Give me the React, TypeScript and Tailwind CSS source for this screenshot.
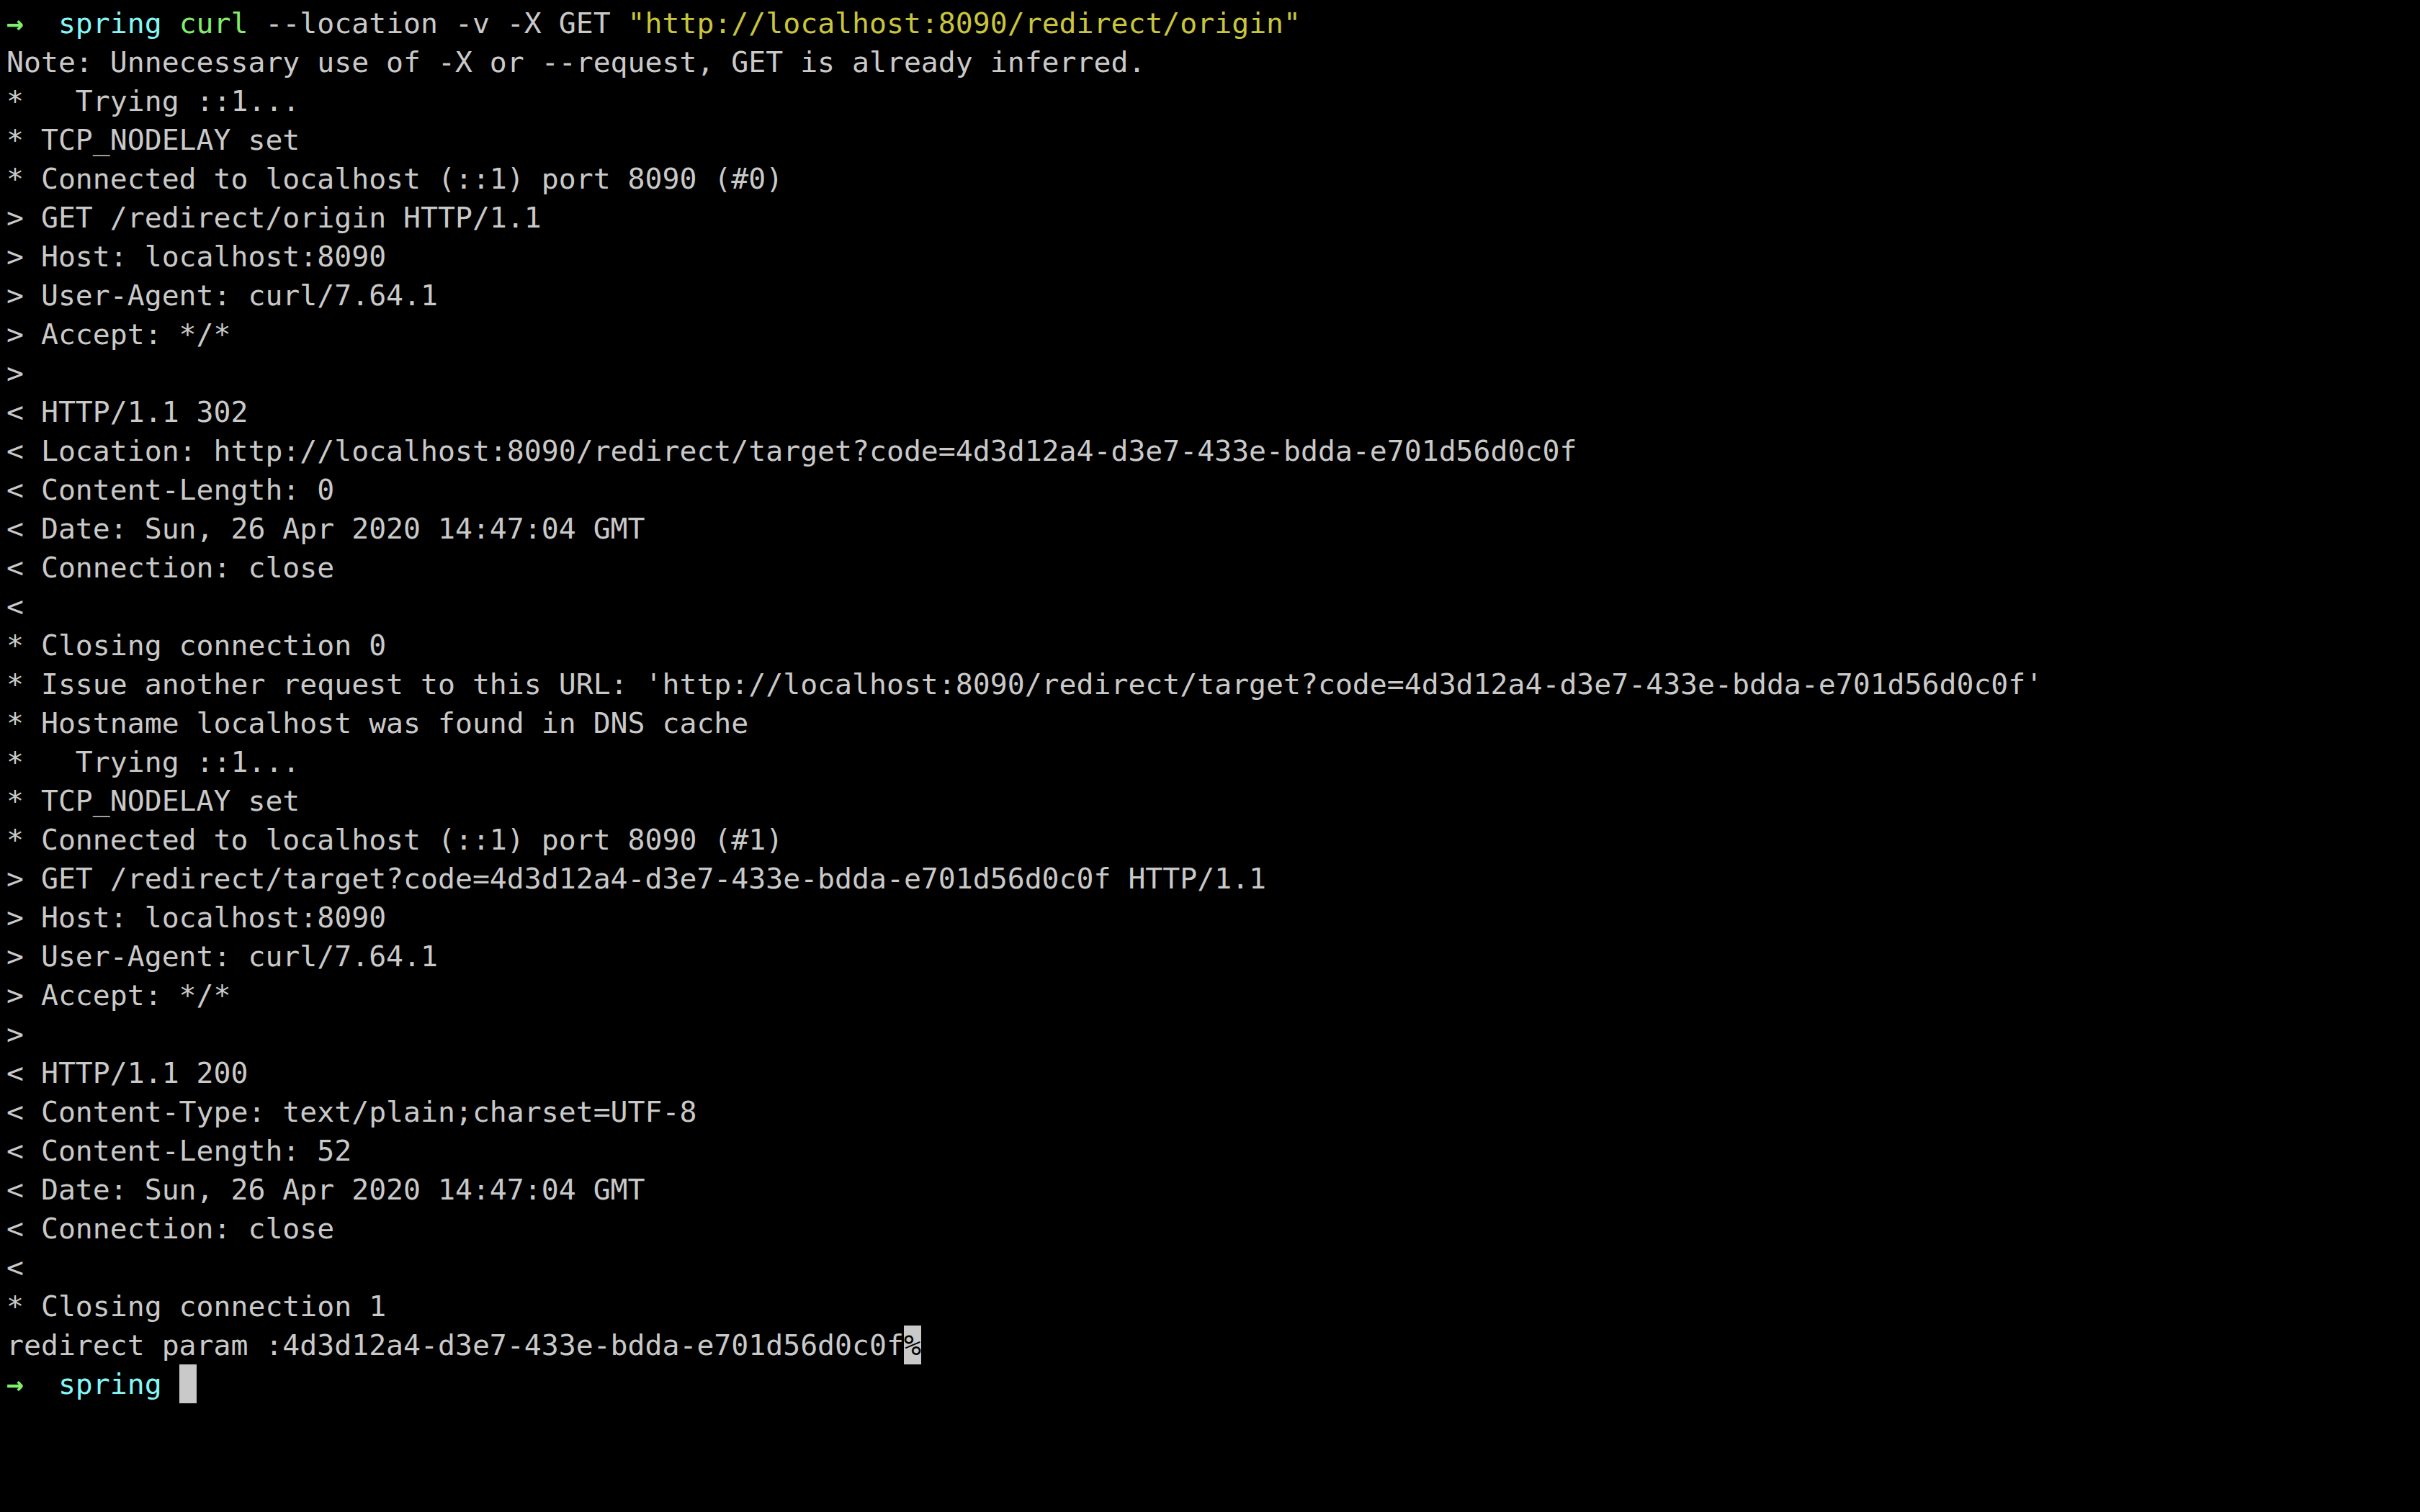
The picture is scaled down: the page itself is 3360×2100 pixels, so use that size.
import React from "react";

const URL_ID = "4d3d12a4-d3e7-433e-bdda-e701d56d0c0f";

const lines: string[] = [
  "Note: Unnecessary use of -X or --request, GET is already inferred.",
  "*   Trying ::1...",
  "* TCP_NODELAY set",
  "* Connected to localhost (::1) port 8090 (#0)",
  "> GET /redirect/origin HTTP/1.1",
  "> Host: localhost:8090",
  "> User-Agent: curl/7.64.1",
  "> Accept: */*",
  ">",
  "< HTTP/1.1 302",
  `< Location: http://localhost:8090/redirect/target?code=${URL_ID}`,
  "< Content-Length: 0",
  "< Date: Sun, 26 Apr 2020 14:47:04 GMT",
  "< Connection: close",
  "<",
  "* Closing connection 0",
  `* Issue another request to this URL: 'http://localhost:8090/redirect/target?code=${URL_ID}'`,
  "* Hostname localhost was found in DNS cache",
  "*   Trying ::1...",
  "* TCP_NODELAY set",
  "* Connected to localhost (::1) port 8090 (#1)",
  `> GET /redirect/target?code=${URL_ID} HTTP/1.1`,
  "> Host: localhost:8090",
  "> User-Agent: curl/7.64.1",
  "> Accept: */*",
  ">",
  "< HTTP/1.1 200",
  "< Content-Type: text/plain;charset=UTF-8",
  "< Content-Length: 52",
  "< Date: Sun, 26 Apr 2020 14:47:04 GMT",
  "< Connection: close",
  "<",
  "* Closing connection 1",
];

function Line({ children }: { children: React.ReactNode }) {
  return <div className="h-[54px] leading-[54px] whitespace-pre">{children}</div>;
}

export default function App() {
  return (
    <div
      className="min-h-screen w-full bg-black text-[#c9c9c9] text-[39.8px] pt-[5px] pl-[9px] overflow-hidden"
      style={{ fontFamily: '"DejaVu Sans Mono", "Liberation Mono", monospace' }}
    >
      <Line>
        <span className="text-[#80ee6c] font-bold">→</span>
        {"  "}
        <span className="text-[#84f7f7]">spring</span>{" "}
        <span className="text-[#80ee6c]">curl</span>
        {" --location -v -X GET "}
        <span className="text-[#c9c53c]">"http://localhost:8090/redirect/origin"</span>
      </Line>
      {lines.map((l, i) => (
        <Line key={i}>{l}</Line>
      ))}
      <Line>
        {`redirect param :${URL_ID}`}
        <span className="bg-[#c9c9c9] text-black inline-block h-[54px]">%</span>
      </Line>
      <Line>
        <span className="text-[#80ee6c] font-bold">→</span>
        {"  "}
        <span className="text-[#84f7f7]">spring</span>{" "}
        <span className="inline-block bg-[#c9c9c9] h-[54px] w-[24px] align-top">{" "}</span>
      </Line>
    </div>
  );
}
